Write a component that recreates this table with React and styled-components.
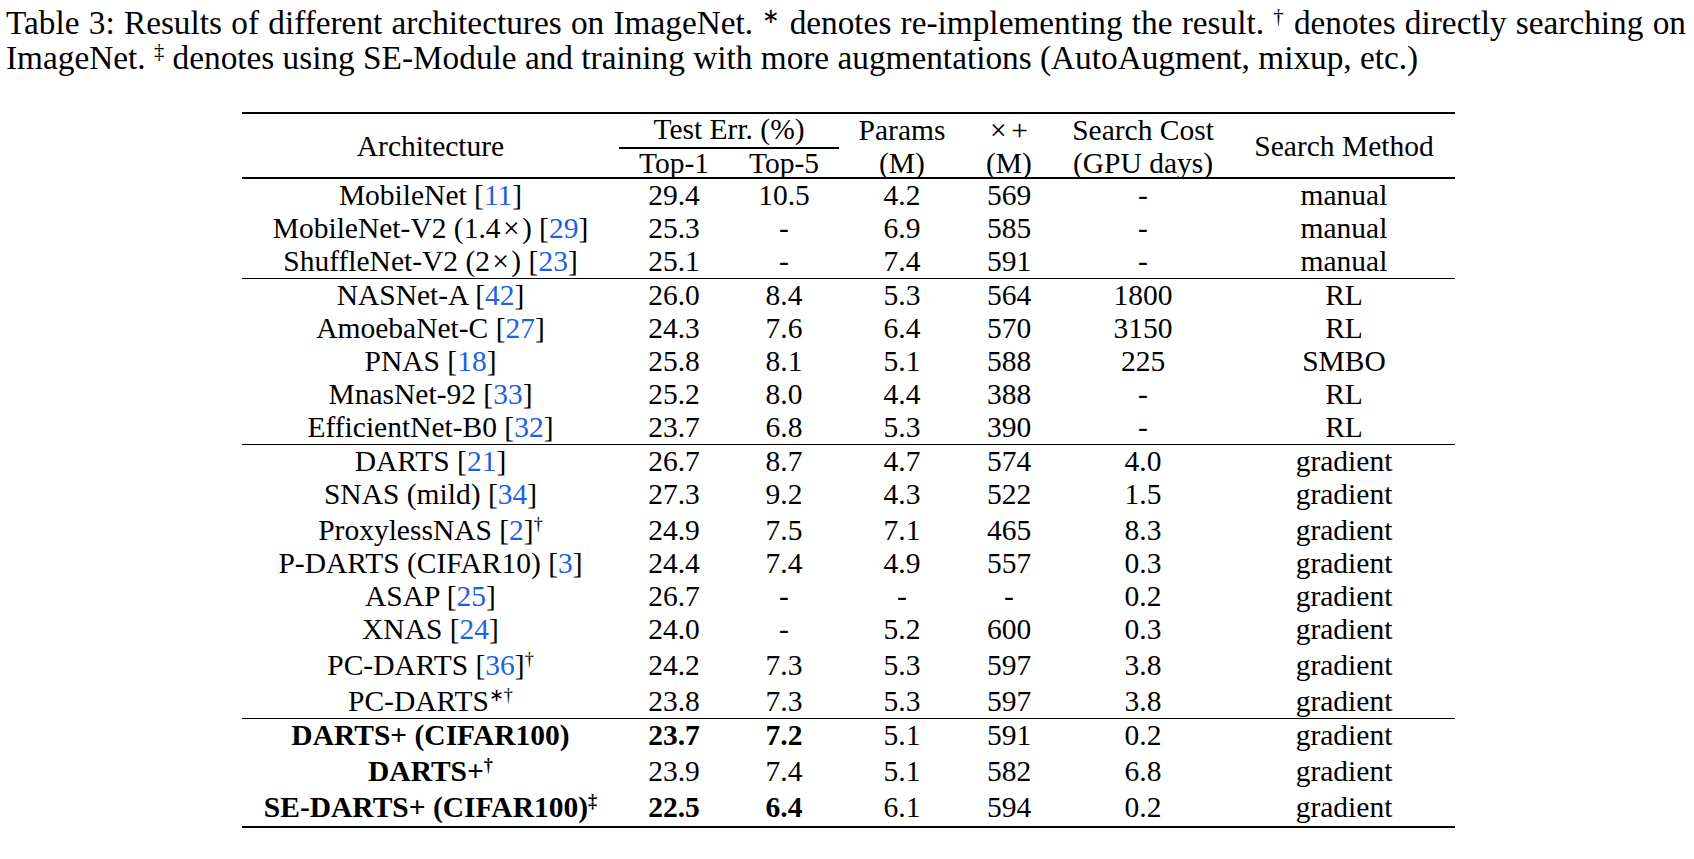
import styled, { createGlobalStyle } from "styled-components";

const GlobalStyle = createGlobalStyle`
  html, body {
    margin: 0;
    padding: 0;
    background: #fff;
  }
`;

const Page = styled.div`
  width: 1694px;
  box-sizing: border-box;
  padding: 6px 8px 0 6px;
  font-family: "Liberation Serif", "Times New Roman", serif;
  color: #000;
`;

const CaptionLine = styled.div`
  font-size: 33.3px;
  line-height: 34.5px;
  white-space: nowrap;
  text-align: ${(p) => (p.$justify ? "justify" : "left")};
  text-align-last: ${(p) => (p.$justify ? "justify" : "left")};
`;

const Sup = styled.sup`
  font-size: 0.62em;
  line-height: 0;
  vertical-align: 0.55em;
`;

const Table = styled.table`
  margin: 37px 0 0 236px;
  width: 1213px;
  table-layout: fixed;
  border-collapse: collapse;
  border-top: 2px solid #000;
  border-bottom: 2px solid #000;
  font-size: 29.5px;
`;

const Col = styled.col`
  width: ${(p) => p.$w}px;
`;

const HeadCell = styled.th`
  font-weight: normal;
  padding: 0;
  text-align: center;
  vertical-align: middle;
  line-height: ${(p) => (p.$top ? "30px" : "28px")};
  padding-bottom: ${(p) => (p.$top ? "3px" : "0")};
  white-space: nowrap;
`;

const SpanRule = styled(HeadCell)`
  border-bottom: 2px solid #000;
`;

const HeadRow = styled.tr`
  border-bottom: ${(p) => (p.$last ? "2px solid #000" : "none")};
`;

const Row = styled.tr`
  border-top: ${(p) => (p.$group ? "1px solid #000" : "none")};
`;

const Cell = styled.td`
  padding: ${(p) => (p.$tall ? "3px 0 0" : "0")};
  padding-bottom: ${(p) => (p.$end ? "2px" : "0")};
  height: 33px;
  line-height: 33px;
  text-align: center;
  vertical-align: top;
  white-space: nowrap;
  font-weight: ${(p) => (p.$bold ? "bold" : "normal")};
`;

const Cite = styled.span`
  color: #1f5fe6;
`;

const MathOp = styled.span`
  padding: 0 0.08em;
`;

const groups = [
  [
    { name: "MobileNet", cite: "11", vals: ["29.4", "10.5", "4.2", "569", "-", "manual"] },
    { name: <>MobileNet-V2 (1.4<MathOp>×</MathOp>)</>, cite: "29", vals: ["25.3", "-", "6.9", "585", "-", "manual"] },
    { name: <>ShuffleNet-V2 (2<MathOp>×</MathOp>)</>, cite: "23", vals: ["25.1", "-", "7.4", "591", "-", "manual"] },
  ],
  [
    { name: "NASNet-A", cite: "42", vals: ["26.0", "8.4", "5.3", "564", "1800", "RL"] },
    { name: "AmoebaNet-C", cite: "27", vals: ["24.3", "7.6", "6.4", "570", "3150", "RL"] },
    { name: "PNAS", cite: "18", vals: ["25.8", "8.1", "5.1", "588", "225", "SMBO"] },
    { name: "MnasNet-92", cite: "33", vals: ["25.2", "8.0", "4.4", "388", "-", "RL"] },
    { name: "EfficientNet-B0", cite: "32", vals: ["23.7", "6.8", "5.3", "390", "-", "RL"] },
  ],
  [
    { name: "DARTS", cite: "21", vals: ["26.7", "8.7", "4.7", "574", "4.0", "gradient"] },
    { name: "SNAS (mild)", cite: "34", vals: ["27.3", "9.2", "4.3", "522", "1.5", "gradient"] },
    { name: "ProxylessNAS", cite: "2", sup: "†", vals: ["24.9", "7.5", "7.1", "465", "8.3", "gradient"] },
    { name: "P-DARTS (CIFAR10)", cite: "3", vals: ["24.4", "7.4", "4.9", "557", "0.3", "gradient"] },
    { name: "ASAP", cite: "25", vals: ["26.7", "-", "-", "-", "0.2", "gradient"] },
    { name: "XNAS", cite: "24", vals: ["24.0", "-", "5.2", "600", "0.3", "gradient"] },
    { name: "PC-DARTS", cite: "36", sup: "†", vals: ["24.2", "7.3", "5.3", "597", "3.8", "gradient"] },
    { name: "PC-DARTS", sup: "∗†", vals: ["23.8", "7.3", "5.3", "597", "3.8", "gradient"] },
  ],
  [
    { name: "DARTS+ (CIFAR100)", bold: true, boldVals: [0, 1], vals: ["23.7", "7.2", "5.1", "591", "0.2", "gradient"] },
    { name: "DARTS+", bold: true, sup: "†", vals: ["23.9", "7.4", "5.1", "582", "6.8", "gradient"] },
    { name: "SE-DARTS+ (CIFAR100)", bold: true, sup: "‡", boldVals: [0, 1], vals: ["22.5", "6.4", "6.1", "594", "0.2", "gradient"] },
  ],
];

const widths = [377, 110, 110, 126, 88, 180, 222];

export default function App() {
  return (
    <>
      <GlobalStyle />
      <Page>
        <CaptionLine $justify>
          Table 3: Results of different architectures on ImageNet. <Sup>∗</Sup> denotes re-implementing the
          result. <Sup>†</Sup> denotes directly searching on
        </CaptionLine>
        <CaptionLine>
          ImageNet. <Sup>‡</Sup> denotes using SE-Module and training with more augmentations (AutoAugment, mixup, etc.)
        </CaptionLine>

        <Table>
          <colgroup>
            {widths.map((w, i) => (
              <Col key={i} $w={w} />
            ))}
          </colgroup>
          <thead>
            <HeadRow>
              <HeadCell rowSpan={2}>Architecture</HeadCell>
              <SpanRule colSpan={2} $top>
                Test Err. (%)
              </SpanRule>
              <HeadCell $top>Params</HeadCell>
              <HeadCell $top>
                <MathOp>×</MathOp>
                <MathOp>+</MathOp>
              </HeadCell>
              <HeadCell $top>Search Cost</HeadCell>
              <HeadCell rowSpan={2}>Search Method</HeadCell>
            </HeadRow>
            <HeadRow $last>
              <HeadCell>Top-1</HeadCell>
              <HeadCell>Top-5</HeadCell>
              <HeadCell>(M)</HeadCell>
              <HeadCell>(M)</HeadCell>
              <HeadCell>(GPU days)</HeadCell>
            </HeadRow>
          </thead>
          <tbody>
            {groups.map((rows, g) =>
              rows.map((r, i) => {
                const end = g === groups.length - 1 && i === rows.length - 1;
                return (
                  <Row key={`${g}-${i}`} $group={g > 0 && i === 0}>
                    <Cell $bold={r.bold} $tall={!!r.sup} $end={end}>
                      {r.name}
                      {r.cite && (
                        <>
                          {" "}[<Cite>{r.cite}</Cite>]
                        </>
                      )}
                      {r.sup && <Sup>{r.sup}</Sup>}
                    </Cell>
                    {r.vals.map((v, j) => (
                      <Cell
                        key={j}
                        $tall={!!r.sup}
                        $end={end}
                        $bold={r.boldVals && r.boldVals.includes(j)}
                      >
                        {v}
                      </Cell>
                    ))}
                  </Row>
                );
              })
            )}
          </tbody>
        </Table>
      </Page>
    </>
  );
}
